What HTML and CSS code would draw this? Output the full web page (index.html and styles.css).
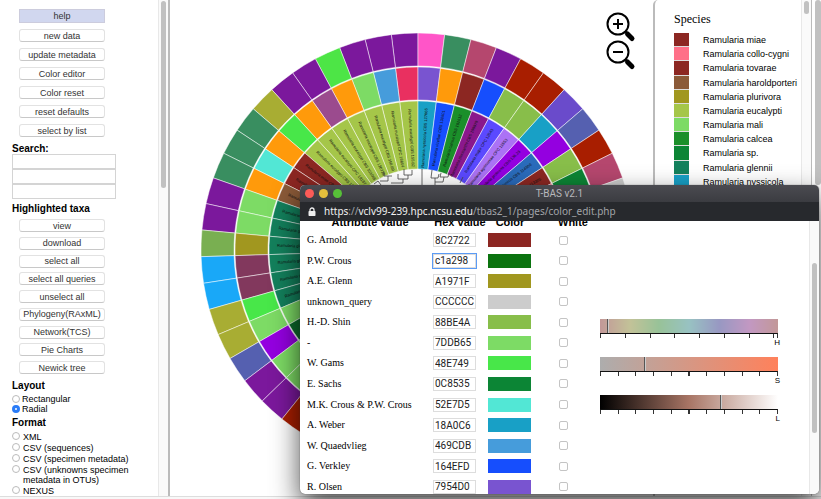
FILE: index.html
```html
<!DOCTYPE html>
<html lang="en">
<head>
<meta charset="utf-8">
<title>T-BAS v2.1</title>
<link rel="stylesheet" href="styles.css">
</head>
<body>
<div class="page">
  <aside class="sidebar">
    <div class="tools">
      <div class="buttons buttons-main">
        <button class="btn btn-help" type="button">help</button>
        <button class="btn" type="button">new data</button>
        <button class="btn" type="button">update metadata</button>
        <button class="btn" type="button">Color editor</button>
        <button class="btn" type="button">Color reset</button>
        <button class="btn" type="button">reset defaults</button>
        <button class="btn" type="button">select by list</button>
      </div>
      <h2 class="heading" id="search">Search:</h2>
      <div class="search">
        <input type="text" aria-labelledby="search">
        <input type="text" aria-labelledby="search">
        <input type="text" aria-labelledby="search">
      </div>
      <h2 class="heading">Highlighted taxa</h2>
      <div class="buttons buttons-taxa">
        <button class="btn" type="button">view</button>
        <button class="btn" type="button">download</button>
        <button class="btn" type="button">select all</button>
        <button class="btn" type="button">select all queries</button>
        <button class="btn" type="button">unselect all</button>
        <button class="btn" type="button">Phylogeny(RAxML)</button>
        <button class="btn" type="button">Network(TCS)</button>
        <button class="btn" type="button">Pie Charts</button>
        <button class="btn" type="button">Newick tree</button>
      </div>
      <h2 class="heading">Layout</h2>
      <div class="options">
        <label><input type="radio" name="layout">Rectangular</label>
        <label><input type="radio" name="layout" checked>Radial</label>
      </div>
      <h2 class="heading">Format</h2>
      <div class="options options-format">
        <label><input type="radio" name="format">XML</label>
        <label><input type="radio" name="format">CSV (sequences)</label>
        <label><input type="radio" name="format">CSV (specimen metadata)</label>
        <label><input type="radio" name="format"><span>CSV (unknowns specimen metadata in OTUs)</span></label>
        <label><input type="radio" name="format">NEXUS</label>
      </div>
    </div>
    <div class="scroll"><div class="thumb thumb-side"></div></div>
  </aside>

  <main class="stage">
    <svg class="wheel" id="wheel" viewBox="170 0 483 495" role="img" aria-label="Radial tree"></svg>
    <div class="zoom">
      <button type="button" aria-label="Zoom in">
        <svg viewBox="0 0 30 28"><circle cx="12" cy="12" r="10.500" /><path d="M12 7v10M7 12h10M19 19l3 3" /><path class="grip" d="M21.500 22l4.500 4.500" /></svg>
      </button>
      <button type="button" aria-label="Zoom out">
        <svg viewBox="0 0 30 28"><circle cx="12" cy="12" r="10.500" /><path d="M7 12h10M19 19l3 3" /><path class="grip" d="M21.500 22l4.500 4.500" /></svg>
      </button>
    </div>
  </main>

  <section class="legend">
    <div class="legend-body">
      <h2 class="legend-title">Species</h2>
      <ul class="species" id="species"></ul>
    </div>
    <div class="scroll"><div class="thumb thumb-legend"></div></div>
  </section>
  <div class="page-scroll"><div class="thumb thumb-page"></div></div>
</div>

<section class="popup">
  <header class="titlebar">
    <div class="lights"><i class="red"></i><i class="yellow"></i><i class="green"></i></div>
    <span class="title">T-BAS v2.1</span>
  </header>
  <div class="address">
    <svg viewBox="0 0 8 10"><path d="M2 5V3a2 2 0 0 1 4 0v2" fill="none" stroke="#eee" stroke-width="1.300"/><rect x="0.500" y="4" width="7" height="5" rx="0.800" fill="#eee"/></svg>
    <span>https<em>://</em>vclv99-239.hpc.ncsu.edu<em>/tbas2_1/pages/color_edit.php</em></span>
  </div>
  <div class="popup-body">
    <div class="editor">
      <table class="colors">
        <thead><tr><th>Attribute value</th><th>Hex value</th><th>Color</th><th>White</th></tr></thead>
        <tbody id="colors"></tbody>
      </table>
    </div>
    <div class="sliders">
      <label class="slider hue"><input type="range" min="0" max="100" value="4"><span class="ticks"></span><span class="name">H</span></label>
      <label class="slider sat"><input type="range" min="0" max="100" value="25"><span class="ticks"></span><span class="name">S</span></label>
      <label class="slider lum"><input type="range" min="0" max="100" value="68"><span class="ticks"></span><span class="name">L</span></label>
    </div>
    <div class="scroll"><div class="thumb thumb-popup"></div></div>
  </div>
</section>
<script src="app.js"></script>
</body>
</html>
```
FILE: styles.css
```css
* { box-sizing: border-box; }
html, body { height: 100%; }
body {
  margin: 0;
  position: relative;
  overflow: hidden;
  background: #f8f8f8;
  color: #000;
  font: 9px/12px "Liberation Sans", Arial, sans-serif;
}
h2, ul { margin: 0; padding: 0; }
button, input { font: inherit; color: inherit; margin: 0; }

.page {
  display: grid;
  grid-template-columns: 170px 1fr 159px 9px;
  height: calc(100% - 2px);
  background: #fff;
  border-bottom: 1px solid #ddd;
}

.scroll { flex: none; width: 10px; background: #fafafa; border-left: 1px solid #e8e8e8; padding: 1px 2px; }
.thumb { border-radius: 4px; background: #c1c1c1; }
.thumb-side { height: 187px; }
.thumb-legend { height: 13px; }
.thumb-page { height: 185px; }
.thumb-popup { height: 170px; margin-top: 41px; }

/* Tool column */
.sidebar { display: flex; min-height: 0; overflow: hidden; border-right: 2px solid #bbb; }
.tools { flex: 1; padding: 9px 0 0 12px; }
.buttons { display: flex; flex-direction: column; justify-content: space-between; width: 86px; margin-left: 7px; }
.buttons-main { height: 128px; margin-bottom: 6px; }
.buttons-taxa { height: 155px; margin-top: 5px; margin-bottom: 6px; }
.btn {
  height: 13px;
  padding: 0;
  border: 1px solid #e2e2e2;
  border-bottom-color: #c8c8c8;
  border-radius: 3px;
  background: #fff;
  color: #333;
  line-height: 10px;
  white-space: nowrap;
}
.btn-help { height: 14px; background: #d1d7ef; border-color: #ccd; border-radius: 0; }
.heading { font-size: 10px; line-height: 11px; font-weight: bold; }
.search { display: flex; flex-direction: column; width: 104px; margin-bottom: 4px; }
.search input { height: 15px; border: 1px solid #d4d4d4; padding: 0 2px; }
.options { display: flex; flex-direction: column; padding: 3px 0; line-height: 10px; }
.options label { display: flex; gap: 2px; width: 126px; }
.options input {
  appearance: none;
  flex: none;
  width: 8px;
  height: 8px;
  margin-top: 1px;
  border: 1px solid #bbb;
  border-radius: 50%;
  background: #fff;
}
.options input:checked { border: 3px solid #2a7cf7; }
.options-format { gap: 1px; padding-top: 4px; }
.options-format label { gap: 3px; }
.options-format input { margin-top: 0; }

/* Tree */
.stage { position: relative; min-width: 0; overflow: hidden; }
.wheel { display: block; width: 100%; }
.wheel text { font: 4px "Liberation Sans", Arial, sans-serif; fill: #111; }
.zoom { position: absolute; top: 12px; right: 17px; display: flex; flex-direction: column; }
.zoom button { width: 30px; height: 28px; padding: 0; border: 0; background: none; }
.zoom svg { display: block; overflow: visible; fill: none; stroke: #000; stroke-width: 2; }
.zoom .grip { stroke-width: 5; stroke-linecap: round; }

/* Legend */
.legend { display: flex; min-width: 0; overflow: hidden; border: 1px solid #bbb; border-width: 0 1px 0 2px; border-radius: 5px 0 0 0; }
.legend-body { flex: 1; min-width: 0; overflow: hidden; padding: 11px 0 0 19px; }
.legend-title { font: 12px/16px "Liberation Serif", "Times New Roman", serif; margin-bottom: 6px; }
.species { display: grid; grid-auto-rows: 1fr; height: 156px; list-style: none; line-height: 14px; white-space: nowrap; }
.species li { display: flex; gap: 14px; }
.species i { flex: none; width: 15px; border-bottom: 1px solid #ddd; }
.page-scroll { padding: 0 0 0 3px; }

/* Color editor window */
.popup {
  position: absolute;
  top: 185px;
  right: 2px;
  bottom: 5px;
  left: 300px;
  display: flex;
  flex-direction: column;
  overflow: hidden;
  border-radius: 5px;
  background: #fff;
  box-shadow: 0 0 1px #333, 0 12px 28px rgba(0, 0, 0, .7);
}
.titlebar { position: relative; display: flex; flex: none; align-items: center; justify-content: center; height: 17px; background: linear-gradient(#4b4b51, #3b3c41); color: #b8b8bc; font: 10px/17px Roboto, sans-serif; }
.lights { position: absolute; left: 5px; display: flex; gap: 5px; }
.lights i { width: 9px; height: 9px; border-radius: 50%; }
.red { background: #fc5b57; }
.yellow { background: #e5bf3c; }
.green { background: #57c038; }
.address { display: flex; flex: none; align-items: center; gap: 8px; height: 19px; padding-left: 8px; background: #27292d; color: #f1f1f1; font: 10px/19px "Noto Sans", sans-serif; white-space: nowrap; }
.address svg { width: 8px; height: 10px; }
.address em { font-style: normal; color: #a2a4a8; }
.popup-body { flex: 1; display: flex; min-height: 0; overflow: hidden; }
.editor { flex: none; width: 300px; height: 0; padding-left: 7px; margin-top: -9px; }
.colors { border-collapse: collapse; table-layout: fixed; width: 286px; height: 285px; font: 10px/14px "Liberation Serif", "Times New Roman", serif; }
.colors th, .colors td { padding: 0; text-align: left; }
.colors th { height: 18px; padding-top: 2px; font: bold 11px/16px "Liberation Sans", Arial, sans-serif; text-align: center; white-space: nowrap; }
.colors th:first-child { width: 126px; }
.colors th:nth-child(2) { width: 54px; }
.colors th:nth-child(3) { width: 46px; }
.colors th:last-child { padding-left: 20px; }
.colors td:last-child { padding-left: 26px; }
.colors input[type="text"] { display: block; width: 43px; height: 14px; padding: 0 1px; border: 1px solid #ddd; font: 10px/12px Roboto, sans-serif; color: #222; outline: none; }
.colors .active { border-color: #5b9bf5; box-shadow: 0 0 0 1px #5b9bf5; }
.colors input[type="checkbox"] { appearance: none; display: block; width: 9px; height: 9px; border: 1px solid #c4c4c4; border-radius: 2px; }
.swatch { display: block; width: 43px; height: 14px; margin-left: 1px; }
.sliders { flex: 1; display: flex; flex-direction: column; padding: 98px 31px 0 0; }
.slider { position: relative; display: block; height: 38px; }
.slider input { appearance: none; display: block; width: 100%; height: 14px; }
.slider input::-webkit-slider-thumb { appearance: none; width: 2px; height: 14px; background: #555; border-right: 1px solid #ccc; }
.hue input { background: linear-gradient(90deg, #c29898, #c2c298 17%, #98c298 33%, #98c2c2 50%, #9898c2 67%, #c298c2 84%, #c29898); }
.sat input { background: linear-gradient(90deg, #adadad, #ff815b); }
.lum input { background: linear-gradient(90deg, #000, #a87565 50%, #fff); }
.ticks { display: block; height: 5px; border-top: 1px solid #111; border-right: 1px solid #333; background: repeating-linear-gradient(90deg, #333 0 1px, transparent 1px 10%); }
.hue .ticks { background: repeating-linear-gradient(90deg, #333 0 1px, transparent 1px 14%); }
.name { display: block; margin-right: -2px; text-align: right; font-size: 8px; line-height: 9px; }
```
FILE: app.js
```javascript
const wheel = document.getElementById('wheel');
const CX = 418, CY = 250, STEP = 360 / 51;

// Segment colors, listed outwards from twelve o'clock on each side.
const rings = [
  { r0: 184, r1: 217,
    left: '#7b189c #7b189c #7b189c #4de546 #7b189c #7b189c #a8ad33 #398e60 #398e60 #398e60 #7b189c #7b189c #79af51 #19a8f8 #19a8f8 #a8ad33 #a8ad33 #5560b0 #7b189c #7b189c #a81e00 #a81e00',
    right: '#ff55c8 #398e60 #b5476e #7b189c #a81e00 #a81e00 #6a4bcb #5560b0 #a81e00 #b5476e #cccccc' },
  { r0: 150, r1: 183,
    left: '#e93060 #469cdb #7ddb65 #ff9a0b #9b4b8e #ff9a0b #48e749 #ff9a0b #52e7d5 #ff9a0b #7ddb65 #7ddb65 #a1971f #82385d #82385d #48e749 #7ddb65 #9400e0 #7ddb65 #7ddb65',
    right: '#7954d0 #ff9a0b #8c2722 #164efd #88be4a #88be4a #18a0c6 #9400e0 #88be4a #0c8535 #cccccc' },
  { r0: 81, r1: 149,
    left: '#a5c649 #a5c649 #a5c649 #a5c649 #a5c649 #a5c649 #a5c649 #8c2722 #8c2722 #8b5a38 #13805c #13805c #13805c #13805c #13805c #13805c #7ddb65 #0c6a2c #13805c',
    right: '#18a0c6 #164efd #1b8f2a #8a188c #5b49ff #ab72f5 #9400e0 #2a6bbb #8c2722 #ff7088' }
];
const names = {
  left: ['eucalypti CBS 155.82', 'eucalypti CPC 16804', 'eucalypti CBS 356.69', 'eucalypti CBS 120728', 'eucalypti CBS 101045', 'eucalypti CPC 19187', 'eucalypti CBS 120726', 'miae CBS 120121', 'miae CPC 19770', 'haroldporteri', 'glennii', 'glennii', 'glennii', 'glennii', 'glennii', 'glennii'],
  right: ['nyssicola CBS 127665', 'vizellae CBS 130601', 'calcea CBS 101612', 'plectranthi CBS 108970', 'major CPC 12543', 'agrimoniae CPC 11653', 'proteens CBS 136.23', 'rumicis CBS 114300', 'tovarae CBS 113305']
};

const point = (r, deg) => {
  const a = deg * Math.PI / 180;
  return (CX + r * Math.sin(a)).toFixed(2) + ' ' + (CY - r * Math.cos(a)).toFixed(2);
};
const wedge = (r0, r1, a, b, fill) =>
  `<path d="M${point(r0, a)}L${point(r1, a)}A${r1} ${r1} 0 0 1 ${point(r1, b)}L${point(r0, b)}A${r0} ${r0} 0 0 0 ${point(r0, a)}Z" fill="${fill}" stroke="#fff" stroke-opacity=".7" stroke-width=".7"/>`;

let art = '';
for (const ring of rings) {
  ring.left.split(' ').forEach((c, i) => { art += wedge(ring.r0, ring.r1, -(i + 1) * STEP, -i * STEP, c); });
  ring.right.split(' ').forEach((c, i) => { art += wedge(ring.r0, ring.r1, i * STEP, (i + 1) * STEP, c); });
}
names.left.forEach((n, i) => {
  const a = -(i + 0.5) * STEP;
  art += `<text transform="translate(${point(141, a)}) rotate(${a + 90})" dy="1">Ramularia ${n}</text>`;
});
names.right.forEach((n, i) => {
  const a = (i + 0.5) * STEP;
  art += `<text transform="translate(${point(142, a)}) rotate(${a - 90})" dy="1" text-anchor="end">Ramularia ${n}</text>`;
});
art += '<path d="M422 169v20M404 169v6h8v-5M408 175v4h-10v-5M403 179v4h-12M384 172v4h8M388 176v5h-8M432 170l-1 8h7l1-4M435 178v8M441 173l-1 4h8l1-4M444 177l-1 5h-8M460 183l3-6M374 184l4-3 3 4" fill="none" stroke="#444" stroke-width=".8"/>';
wheel.innerHTML = art;

const species = [
  ['miae', '#8c2722'], ['collo-cygni', '#ff7088'], ['tovarae', '#8c2722'], ['haroldporteri', '#8b5a38'],
  ['plurivora', '#a1971f'], ['eucalypti', '#a5c649'], ['mali', '#7ddb65'], ['calcea', '#1b8f2a'],
  ['sp.', '#0c8535'], ['glennii', '#13805c'], ['nyssicola', '#18a0c6']
];
document.getElementById('species').innerHTML = species
  .map(([n, c]) => `<li><i style="background:${c}"></i>Ramularia ${n}</li>`).join('');

const people = [
  ['G. Arnold', '8C2722'], ['P.W. Crous', 'c1a298', '#0b730f'], ['A.E. Glenn', 'A1971F'], ['unknown_query', 'CCCCCC'],
  ['H.-D. Shin', '88BE4A'], ['-', '7DDB65'], ['W. Gams', '48E749'], ['E. Sachs', '0C8535'],
  ['M.K. Crous &amp; P.W. Crous', '52E7D5'], ['A. Weber', '18A0C6'], ['W. Quaedvlieg', '469CDB'],
  ['G. Verkley', '164EFD'], ['R. Olsen', '7954D0']
];
document.getElementById('colors').innerHTML = people.map(([n, hex, shown], i) =>
  `<tr><td><label for="hex${i}">${n}</label></td>
   <td><input type="text" id="hex${i}" value="${hex}"${shown ? ' class="active"' : ''}></td>
   <td><span class="swatch" style="background:${shown || '#' + hex}"></span></td>
   <td><input type="checkbox" aria-label="White for ${n}"></td></tr>`).join('');

const active = document.querySelector('.active');
active.focus({ preventScroll: true });
active.setSelectionRange(6, 6);
```
